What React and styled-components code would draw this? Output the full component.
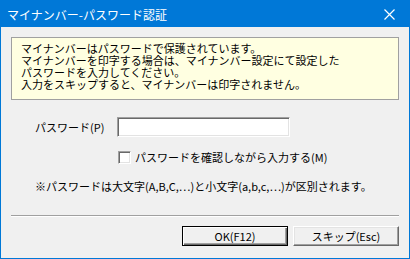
import styled, { createGlobalStyle } from "styled-components";

const Global = createGlobalStyle`
    body {
        margin: 0;
        background: #f0f0f0;
        font-family: "Noto Sans CJK JP", "Noto Sans", sans-serif;
    }
`;

const App = () => {
    return (
        <>
            <Global />
            <Win>
                <TitleBar>
                    <Title>マイナンバー-パスワード認証</Title>
                    <CloseBtn>
                        <svg width="11" height="11" viewBox="0 0 11 11">
                            <path d="M0.5 0.5 L10.5 10.5 M10.5 0.5 L0.5 10.5" stroke="#fff" strokeWidth="1.2" />
                        </svg>
                    </CloseBtn>
                </TitleBar>
                <Body>
                    <InfoBox>
                        <Line>マイナンバーはパスワードで保護されています。</Line>
                        <Line>マイナンバーを印字する場合は、マイナンバー設定にて設定した</Line>
                        <Line>パスワードを入力してください。</Line>
                        <Line>入力をスキップすると、マイナンバーは印字されません。</Line>
                    </InfoBox>

                    <PassRow>
                        <Label>パスワード(P)</Label>
                        <Input type="password" />
                    </PassRow>

                    <CheckRow>
                        <Check />
                        <CheckText>パスワードを確認しながら入力する(M)</CheckText>
                    </CheckRow>

                    <Note>※パスワードは大文字(A,B,C,…)と小文字(a,b,c,…)が区別されます。</Note>

                    <Sep />

                    <Buttons>
                        <Btn $default>OK(F12)</Btn>
                        <Btn>スキップ(Esc)</Btn>
                    </Buttons>
                </Body>
            </Win>
        </>
    );
}

export default App;

const Win = styled.div`
    width: 410px;
    height: 259px;
    box-sizing: border-box;
    border: 1px solid #0078d7;
    border-top: none;
    background: #f0f0f0;
    display: flex;
    flex-direction: column;
`
const TitleBar = styled.div`
    height: 27px;
    background: #0078d7;
    display: flex;
    align-items: center;
    justify-content: space-between;
    padding: 0 14px 0 6px;
`
const Title = styled.span`
    color: #fff;
    font-size: 12px;
    margin-top: 2px;
`
const CloseBtn = styled.span`
    display: flex;
    margin-top: 2px;
`
const Body = styled.div`
    flex: 1;
    display: flex;
    flex-direction: column;
    padding: 10px 10px 0 10px;
    color: #000;
    font-size: 11px;
`
const InfoBox = styled.div`
    height: 63px;
    box-sizing: border-box;
    border: 1px solid #a0a0a0;
    background: #ffffe1;
    padding: 4px 9px;
`
const Line = styled.div`
    line-height: 12px;
`
const PassRow = styled.div`
    display: flex;
    align-items: center;
    margin-top: 17px;
    padding-left: 24px;
`
const Label = styled.span`
    width: 82px;
`
const Input = styled.input`
    width: 173px;
    height: 20px;
    box-sizing: border-box;
    margin: 0;
    border: 1px solid;
    border-color: #a0a0a0 #fff #fff #a0a0a0;
    box-shadow: inset 1px 1px 0 #696969, inset -1px -1px 0 #e3e3e3;
    background: #fff;
    outline: none;
`
const CheckRow = styled.div`
    display: flex;
    align-items: center;
    margin-top: 12px;
    padding-left: 107px;
`
const Check = styled.span`
    width: 13px;
    height: 13px;
    box-sizing: border-box;
    border: 1px solid;
    border-color: #a0a0a0 #fff #fff #a0a0a0;
    box-shadow: inset 1px 1px 0 #696969, inset -1px -1px 0 #e3e3e3;
    background: #fff;
`
const CheckText = styled.span`
    margin-left: 4px;
`
const Note = styled.div`
    margin-top: 13px;
    padding-left: 24px;
`
const Sep = styled.div`
    margin-top: 21px;
    height: 1px;
    background: #a0a0a0;
    border-bottom: 1px solid #fff;
`
const Buttons = styled.div`
    display: flex;
    justify-content: flex-end;
    gap: 5px;
    margin-top: 9px;
`
const Btn = styled.button`
    width: 106px;
    height: 20px;
    box-sizing: border-box;
    margin: 0;
    padding: 0;
    font-family: inherit;
    font-size: 11px;
    color: #000;
    background: #f0f0f0;
    border: 1px solid;
    border-color: ${p => p.$default ? "#000" : "#fff #696969 #696969 #fff"};
    box-shadow: ${p => p.$default
        ? "inset 1px 1px 0 #fff, inset -1px -1px 0 #696969, inset -2px -2px 0 #a0a0a0"
        : "inset -1px -1px 0 #a0a0a0, inset 1px 1px 0 #e3e3e3"};
`
